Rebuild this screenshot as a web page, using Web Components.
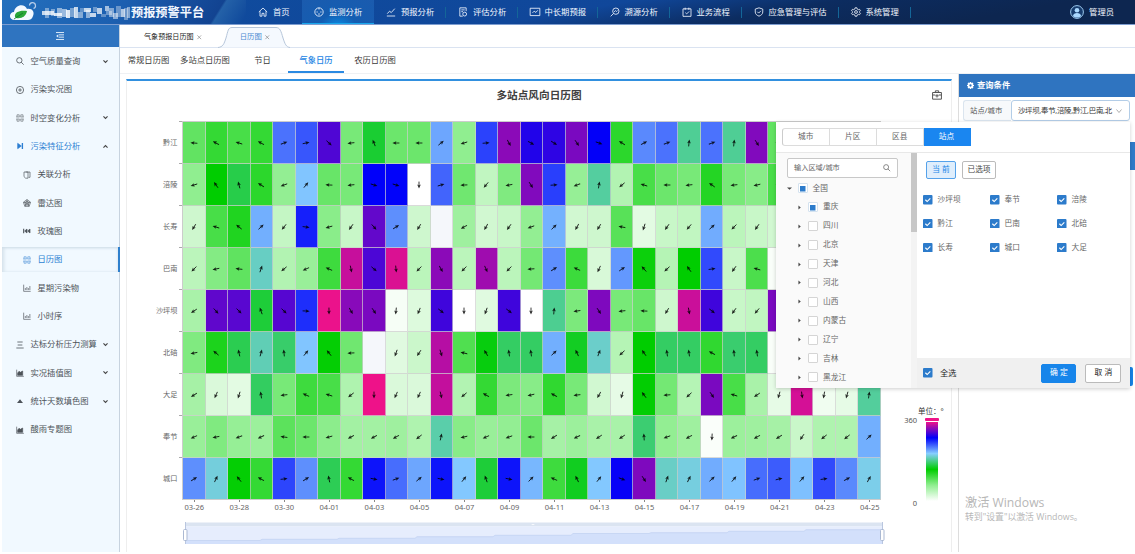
<!DOCTYPE html>
<html lang="zh-CN">
<head>
<meta charset="utf-8">
<title>预报预警平台</title>
<style>
html,body{margin:0;height:100%}
body{font-family:"Noto Sans","Noto Sans CJK SC",sans-serif;font-size:8.3px;line-height:1;color:#444;background:#fff;overflow:hidden;white-space:nowrap}
</style>
</head>
<body>
<dashboard-app></dashboard-app>
<script>
const ICONS = {
  home:'<path d="M1 6 6 1.2 11 6M2.4 5v6h2.4V7.6h2.4V11h2.4V5"/>',
  gauge:'<circle cx="6" cy="6" r="5"/><path d="M3 6h1.500M7.500 6H9M6 1v2M5 8.400h2"/>',
  trend:'<path d="M1 10.8h10M1.5 8 4.3 5l2 1.7L10.5 2"/>',
  doc:'<path d="M9.8 5V1H2.2v10h3.5M4 3.5h4M4 5.6h2"/><circle cx="8" cy="8.5" r="2.3"/>',
  chart:'<path d="M.2 1.5h11.600v8.8H.2zM3 7l2-2 2 1.5L9.3 4"/>',
  trace:'<circle cx="7" cy="5" r="3.8"/><path d="m4.2 7.8-3.4 3.4M5 6l1.6-1.7L8 5.4l1.2-1.2"/>',
  check:'<path d="M1.2 2.2h9.6v9H1.2zM3.8.8v2.6M8.2.8v2.6M4 6.8l1.6 1.5 3-3"/>',
  shield:'<path d="M6 1 10.5 2.5V6c0 2.6-2 4-4.5 5C3.500 10 1.500 8.600 1.500 6V2.500zM4 5.700l1.600 1.600 2.700-2.700"/>',
  gear:'<circle cx="6" cy="6" r="1.7"/><path d="M5 .9h2l.4 1.500 1.400.8 1.500-.4 1 1.700-1.100 1.100v.8l1.100 1.100-1 1.700-1.500-.4-1.400.8L7 11.100H5l-.4-1.500-1.400-.8-1.500.4-1-1.700 1.100-1.100v-.8L.7 4.500l1-1.700 1.500.4 1.400-.8z"/>',
  search:'<circle cx="5" cy="5" r="4" stroke-width="1.200"/><path d="m7.800 7.800 3.700 3.700" stroke-width="1.200"/>',
  plus:'<circle cx="6" cy="6" r="5.400" stroke-width="1.200"/><path d="M6 3.300v5.400M3.300 6h5.400" stroke-width="1.200"/>',
  cal:'<path d="M1.500 4.500V1.200h3.300v3.300M7.200 4.500V1.200h3.300v3.300M1.500 7.500v3.300h3.300V7.500M7.200 7.500v3.300h3.300V7.500M.3 4.500h5M6.700 4.500h5M.3 7.500h5M6.700 7.500h5" stroke-width=".8"/>',
  next:'<path d="M2.500 2v8L8 6z" fill="currentColor"/><path d="M9.600 1.500v9" stroke-width="2"/>',
  copy:'<path d="M4 1.500h6.500v8H8.500M1.500 1.500h6v9.300H4L1.500 8.500z"/>',
  radar:'<path d="M6 .8 11.300 4.800 9.300 11H2.700L.7 4.800zM6 3 9 5.300 8 9H4L3 5.300zM6 1v5M1 5l5 1M11 5 6 6M3 11l3-5M9 11 6 6"/>',
  rew:'<path d="M1 2.500v7" stroke-width="1.600"/><path d="M6 3v6L2.500 6zM10.500 3v6L7 6z" fill="currentColor"/>',
  bars:'<path d="M1 1v10h10.500M3.500 9V6M5.800 9V4.500M8 9V6M10.300 9V3"/>',
  lines:'<path d="M2 1.500h8M2.500 6h7M.5 10.500h11" stroke-width="1.200"/>',
  area:'<path d="M1 1v10h10.800"/><path d="M2.500 9.500V6l2-2.500 2 1.500 3.500-2v6.500z" fill="currentColor"/>',
  tri:'<path d="M1.500 9 6 3.500 10.500 9z" fill="currentColor" stroke="none"/>',
  down:'<path d="m2.500 4 3.500 3.500L9.500 4" stroke-width="1.900"/>',
  up:'<path d="M2.500 8 6 4.500 9.500 8" stroke-width="1.900"/>',
  thindown:'<path d="m1 3 5 6 5-6" stroke-width="1.200"/>',
  close:'<path d="m1 1 10 10m0-10-10 10" stroke-width="1.600"/>',
  fold:'<path d="M0 .8h12M4.500 4.300H12M4.500 7.700H12M0 11.200h12" stroke-width="1.400"/><path d="M3.500 3.500v5L.3 6z" fill="currentColor" stroke="none"/>',
  cog:'<path fill="currentColor" fill-rule="evenodd" stroke="none" d="M5 0h2l.4 1.800L9.500.9l1.500 1.500-1 2 2 .6v2l-2 .6 1 2-1.500 1.500-2-1L7 12H5l-.5-1.900-2 1L1 9.600l1-2L0 7V5l2-.6-1-2L2.500.9l2 .9zM6 4a2 2 0 1 0 0 4 2 2 0 0 0 0-4z"/>',
  kit:'<path d="M.7 3h10.600v8H.7zM4 3V1h4v2M.7 6H4m4 0h3.300M6 5v4M4 7h4" stroke-width="1.200"/>',
  right:'<path d="M3.500 1v10L9 6z" fill="currentColor" stroke="none"/>',
  opened:'<path d="M0 3.500h12L6 9z" fill="currentColor" stroke="none"/>'
};
function define(name, css, html){
  customElements.define(name, class extends HTMLElement{
    constructor(){
      super();
      const t=document.createElement('template');
      t.innerHTML='<style>*{box-sizing:border-box}'+css+'</style>'+html;
      this.attachShadow({mode:'open'}).append(t.content.cloneNode(true));
    }
  });
}
customElements.define('ui-icon', class extends HTMLElement{
  constructor(){super();this.attachShadow({mode:'open'});}
  connectedCallback(){
    this.shadowRoot.innerHTML='<style>:host{display:block;flex:none;width:9px;height:9px}svg{display:block;width:100%;height:100%;overflow:visible}</style><svg viewBox="0 0 12 12" fill="none" stroke="currentColor" stroke-width="1">'+ICONS[this.getAttribute('name')]+'</svg>';
  }
});
const icon=(n,c='')=>`<ui-icon name="${n}" class="${c}"></ui-icon>`;

/* top bar */
const nav=[['home','首页'],['gauge','监测分析'],['trend','预报分析'],['doc','评估分析'],['chart','中长期预报'],['trace','溯源分析'],['check','业务流程'],['shield','应急管理与评估'],['gear','系统管理']];
const mosaic=[[42,11,12,4,.75],[45,8,4,10,.4],[51,9,4,7,.4],[54,13,8,3,.8],[57,8,5,10,.5],[62,9,5,8,.55],[66,10,4,8,.85],[70,8,5,9,.4],[74,7,4,11,.75],[78,12,5,6,.45],[80,8,4,4,.3],[84,8,7,4,.75],[86,10,4,8,.5],[90,13,6,4,.75],[93,7,4,5,.35],[97,8,5,6,.7],[101,14,5,3,.3],[105,6,4,5,.6],[106,11,6,4,.35],[109,8,5,9,.45],[113,13,5,6,.5],[116,6,5,11,.35],[121,9,4,8,.65],[124,8,4,12,.35],[127,7,3,11,.45]].map(a=>`<rect x="${a[0]}" y="${a[1]}" width="${a[2]}" height="${a[3]}" fill="#fff" opacity="${a[4]}"/>`).join('');
define('top-bar',`
:host{display:flex;height:25px;margin-left:2px;color:#f4f8ff;background:linear-gradient(170deg,#0f4d9f 0,#10479a 50%,#0c2c60 66%,#0d2650 85%);border-bottom:1px solid #7d9dd0}
.brand{width:244px;display:flex;align-items:center;background:linear-gradient(122deg,#2470bd 0,#1c5fb0 48%,#124391 86%,#2461a8 87%,#104a9c 98%)}
.brand svg{width:128px;height:24px;flex:none}
h1{margin:2px 0 0 1px;font-size:12.200px;font-weight:700}
nav{display:grid;grid-template-columns:56px 72px 72px 71.500px 80px 72px 72px 97px 72px}
a{display:flex;align-items:center;gap:5px;padding-left:12px;position:relative}
a ui-icon{width:10px;height:10px}
a+a+a:after{content:"";position:absolute;right:0;top:7px;height:11px;width:1px;background:#146698}
a.on{background:radial-gradient(ellipse at 50% 110%,#0c8ae2 0,#145db1 35%,#1b5bae 100%);box-shadow:inset 0 -1px #19a9ee}
.user{margin-left:auto;margin-right:21px;display:flex;align-items:center;gap:5px}
.user svg{width:14px;height:14px}
`,`<div class="brand"><svg viewBox="2 0 128 24"><path d="M15 20C8 20 9 12 14 12c1-8 11-9 13-3 5-1 8 3 6 7-1 3-3 4-5 4z" fill="#f4f9ff"/><path d="M15 17c-1-5 5-7 12-6-1 5-5 8-11 7z" fill="#29a638"/><path d="m14 19 9-6" stroke="#0c7728" stroke-width=".8"/><path d="M29.500 5.500a3 3 0 1 1 4 3" fill="none" stroke="#b7cdea" stroke-width="1.200"/>${mosaic}</svg><h1>预报预警平台</h1></div>
<nav>${nav.map((n,i)=>`<a class="${i==1?'on':''}">${icon(n[0])}<span>${n[1]}</span></a>`).join('')}</nav>
<div class="user"><svg viewBox="0 0 14 14"><circle cx="7" cy="7" r="6.400" fill="#173c6e" stroke="#9cc9ee"/><circle cx="7" cy="5.300" r="2.300" fill="#a9d8ff"/><path d="M3 11c0-4 8-4 8 0-2 2-6 2-8 0z" fill="#a9d8ff"/></svg><span>管理员</span></div>`);

/* left menu */
const menu=[['search','空气质量查询','down'],['plus','污染实况图'],['cal','时空变化分析','down'],['next','污染特征分析','up','hl'],['copy','关联分析','','sub'],['radar','雷达图','','sub'],['rew','玫瑰图','','sub'],['cal','日历图','','sub on'],['bars','星期污染物','','sub'],['bars','小时序','','sub'],['lines','达标分析压力测算','down'],['area','实况插值图','down'],['tri','统计天数填色图','down'],['area','酸雨专题图']];
define('side-menu',`
:host{display:flex;flex-direction:column;width:118px;background:#f1f9ff;border-right:1px solid #c7d3df}
.fold{height:22px;background:#2f74c0;display:flex;align-items:center;justify-content:center;color:#e8f2fc}
.fold ui-icon{width:10px;height:8px;margin-right:2px}
.i{height:28.350px;display:flex;align-items:center;padding-left:14px;color:#4d5359}
.i span{margin-left:6.500px;flex:1}.i>ui-icon:first-child{width:8px;height:8px}
.i .ar{width:7px;height:7px;margin-right:10px;color:#444}
.sub{padding-left:21px}.hl{color:#2d7fd2}
.on{color:#2d7fd2;height:24.350px;margin:2px -1px 2px 0;border-right:2px solid #2f80cd;box-shadow:inset 0 1px 3px #cddbe5,inset 3px 0 3px #e0ebf3}
`,`<div class="fold">${icon('fold')}</div>${menu.map(m=>`<div class="i ${m[3]||''}">${icon(m[0])}<span>${m[1]}</span>${m[2]?icon(m[2],'ar'):''}</div>`).join('')}`);

/* page tabs and view tabs */
define('page-tabs',`
:host{display:flex;height:23px;border-bottom:1px solid #dae3f1;padding-left:24px;align-items:center;color:#222}
div{display:flex;align-items:center;gap:3.500px;font-size:7.100px;padding-top:2px}
ui-icon{width:4.500px;height:4.500px;color:#777}
.two{position:relative;margin-left:16px;width:70px;height:22px;padding-left:22px;color:#4a8ad2;font-size:7.400px}
.two svg{position:absolute;left:0;top:1px;width:72px;height:22px}
.two span,.two ui-icon{position:relative}
`,`<div><span>气象预报日历图</span>${icon('close')}</div><div class="two"><svg viewBox="0 0 72 22"><path d="M0 21.500C5 21 6 18 8 12 10 5 10 1.500 14 1.500H58C62 1.500 63 5 65 12 67 18 68 21 72 21.500" fill="#f5f9fe" stroke="#b6c6da"/></svg><span>日历图</span>${icon('close')}</div>`);
define('view-tabs',`
:host{display:grid;grid-template-columns:47px 66px 49px 57px 62px;height:26px;padding-left:5px;border-bottom:1px solid #eff1f4;color:#3b3b3b}
span{display:flex;align-items:center;justify-content:center}
.on{color:#1c84e4;border-bottom:2px solid #2b8ae2;height:25px;font-weight:500;padding-top:2px;margin-left:1px}
`,`<span>常规日历图</span><span>多站点日历图</span><span>节日</span><span class="on">气象日历</span><span>农历日历图</span>`);

/* wind direction heat map */
const N=null;
const rows=[
['黔江',95,118,108,118,248,258,312,84,158,90,90,230,72,265,330,298,302,325,289,122,240,248,186,248,186,327,95,90,80,70,60],
['涪陵',72,144,165,122,70,219,92,84,288,287,0,253,88,40,80,327,266,68,189,50,108,90,84,126,84,76,108,90,80,70,60],
['长寿',32,108,128,227,38,277,75,36,318,238,32,N,62,30,36,70,226,30,32,100,18,36,40,228,44,36,30,30,30,30,30],
['巴南',44,78,96,199,50,66,113,348,311,354,44,330,44,336,44,86,238,114,25,235,138,48,144,262,36,106,4,20,20,20,20],
['沙坪坝',56,317,315,160,314,272,359,329,325,6,22,307,0,20,307,0,185,82,326,84,92,32,349,307,36,40,325,60,60,60,60],
['北碚',80,130,167,195,174,219,142,88,N,20,34,343,104,148,172,172,227,154,201,48,144,172,172,120,175,172,4,50,50,50,50],
['大足',58,24,18,171,84,113,108,52,360,24,24,347,50,118,82,76,120,84,30,16,143,86,48,325,108,56,16,352,10,16,188],
['奉节',66,80,68,64,98,90,74,60,60,62,52,192,76,66,70,90,58,64,56,56,176,70,62,3,64,62,58,35,52,52,227],
['城口',238,206,142,118,264,238,168,118,281,250,230,281,218,160,281,224,113,153,218,290,326,200,207,228,220,250,256,221,262,240,210]];
const stops=[[255,255,255],[144,238,144],[0,205,0],[135,206,255],[0,0,250],[238,18,137]];
function tint(v){
  if(v===N) return '#f5f7fb';
  const p=Math.min(v/72,4.9999),i=Math.floor(p),f=p-i;
  return 'rgb('+stops[i].map((c,k)=>Math.round(c+(stops[i+1][k]-c)*f)).join()+')';
}
const arrow=v=>v===N?'':`<svg viewBox="-5 -5 10 10" style="transform:rotate(${v}deg)"><path d="M0-3.400V1"/><path d="M0 3.600-1.800-.4 0 .4 1.800-.4z" class="h"/></svg>`;
const dates=['03-26','03-28','03-30','04-01','04-03','04-05','04-07','04-09','04-11','04-13','04-15','04-17','04-19','04-21','04-23','04-25'];
define('wind-heatmap',`
:host{display:grid;grid-template-columns:56px 699px;grid-template-rows:378px 15px;font-size:7.200px;color:#666}
.y{display:grid;grid-template-rows:repeat(9,42px)}
.y span{display:flex;align-items:center;justify-content:flex-end;padding:1px 4.500px 0 0;position:relative}
.y span:after{content:"";position:absolute;right:0;top:0;width:3px;height:1px;background:#aaa}
.m{display:grid;grid-template:repeat(9,42px)/repeat(31,22.530px);border-left:1px solid #ccc;border-top:1px solid #ccc;border-bottom:1px solid #ccc;width:699px;height:379px;overflow:hidden}
.c{border-right:1px solid #cfcfcfb0;border-bottom:1px solid #cfcfcfc0;display:flex;align-items:center;justify-content:center}
svg{width:10px;height:10px;stroke:#000;stroke-width:.9;opacity:.85}.h{stroke:none;fill:#000}
.x{grid-column:2;display:grid;grid-template-columns:repeat(31,22.530px);font-size:7.500px;padding:1px 0 0 1px}
.x span{display:flex;justify-content:center;position:relative;padding-top:4px}
.x span:nth-child(odd):before{content:"";position:absolute;top:0;left:11px;width:1px;height:2px;background:#888}
`,`<div class="y">${rows.map(r=>`<span>${r[0]}</span>`).join('')}</div><div class="m">${rows.map(r=>r.slice(1).map(v=>`<div class="c" style="background:${tint(v)}">${arrow(v)}</div>`).join('')).join('')}</div><div class="x">${dates.map(d=>`<span>${d}</span><span></span>`).join('')}</div>`);
const steps='M185 540.500H260L262 539.300H337L339 538.300H415L417 536.700H493L495 535.300H571L573 533.500H649L651 532.700H727L729 531.300H804L806 529.700H883';
define('zoom-slider',`
:host{display:block;width:704px;height:24px;margin:7px 0 0 55px}svg{display:block}
`,`<svg width="704" height="24" viewBox="182 521 704 24"><path d="M185 522.500h698v4H185z" fill="#dbe4f1"/><path d="M185 526.500h698V544H185z" fill="#e6edfd"/><path d="${steps}V544H185z" fill="#d3e0fb"/><path d="${steps}" fill="none" stroke="#bfd0f0" stroke-width=".7"/><path d="M185.500 522v22M882.500 522v22" stroke="#b9c6df"/><rect x="183.500" y="529.500" width="3.500" height="11" rx="1" fill="#fff" stroke="#abb9d3"/><rect x="880.500" y="529.500" width="3.500" height="11" rx="1" fill="#fff" stroke="#abb9d3"/><path d="m531 524 2 1 2-1z" fill="#fff"/></svg>`);
define('color-legend',`
:host{display:grid;grid-template-columns:15px 1fr;grid-template-rows:10px 84px;align-content:start;column-gap:7px;width:44px;font-size:7.500px;color:#555}
.t{grid-column:1/3;padding-left:15px;color:#333}
.n{display:flex;flex-direction:column;justify-content:space-between;align-items:flex-end;height:90px;margin:-1px 1px 0 -1px}
.b{width:14px}.b i{display:block;height:3px;width:14px;border-radius:1px;background:#ee1289;margin-bottom:1px}
.b b{display:block;height:79px;width:12px;margin-left:1px;background:linear-gradient(0deg,#fff,#90ee90 20%,#00cd00 40%,#87ceff 60%,#0000fa 80%,#ee1289)}
`,`<div class="t">单位：°</div><div class="n"><span>360</span><span>0</span></div><div class="b"><i></i><b></b></div>`);
define('chart-panel',`
:host{display:grid;grid-template-columns:775px 1fr;grid-template-rows:42px 1fr;width:826px;margin:5px 0 0 6px;border-top:2px solid #3290df;border-right:1px solid #eee;border-left:1px solid #eee}
header{grid-column:1/3;display:grid;grid-template-columns:1fr 18px;padding-top:7px}
h2{margin:2px 0 0;font-size:10.650px;font-weight:700;color:#404040;text-align:center;padding-left:18px}
header ui-icon{width:10px;height:10px;margin-top:2px;margin-left:-1px;color:#555}
color-legend{margin-top:285px;margin-left:1px}
wind-heatmap{margin:-2px 0 0 -1px}
`,`<header><h2>多站点风向日历图</h2>${icon('kit')}</header><div><wind-heatmap></wind-heatmap><zoom-slider></zoom-slider></div><color-legend></color-legend>`);

/* query panel */
define('query-panel',`
:host{display:block;width:177px;border-left:1px solid #ddd;position:relative}
header{height:23px;background:#2f74c0;color:#fff;display:flex;align-items:center;padding-left:8px;gap:3px;font-weight:700}
header ui-icon{width:7px;height:7px}
.f{display:flex;margin:3px 0 0 4px;height:21px;width:167px;border-radius:3px;color:#555;font-size:7.800px}
.l{width:48px;border:1px solid #dbe5ef;border-right:0;border-radius:3px 0 0 3px;background:#f7f9fb;display:flex;align-items:center;padding-left:6px;font-size:7.400px}
.v{flex:1;border:1px solid #b3cde7;border-radius:3px;display:flex;align-items:center;justify-content:space-between;padding:0 7px 0 6px;color:#333;font-size:7.400px;letter-spacing:-.28px}
.v ui-icon{width:6px;height:6px;color:#777}
.b{width:5px;height:28px;background:#2f7bc9;margin:21px 0 0 171px}
.c{width:3px;height:19px;background:#1684e8;margin:197px 0 0 171px;border-radius:0 2px 2px 0}
.w{margin:111px 0 0 6px;color:#b7b7b7;font-size:12.200px;font-family:"Open Sans","Noto Sans CJK SC",sans-serif}
.w p{margin:4px 0 0;font-size:8.850px}
`,`<header>${icon('cog')}查询条件</header><div class="f"><div class="l">站点/城市</div><div class="v"><span>沙坪坝,奉节,涪陵,黔江,巴南,北</span>${icon('thindown')}</div></div><div class="b"></div><div class="c"></div><div class="w">激活 Windows<p>转到"设置"以激活 Windows。</p></div>`);

/* station picker */
define('check-item',`
:host{display:flex;align-items:center;gap:5px}
svg{width:9.500px;height:9.500px;flex:none}
`,`<svg viewBox="0 0 10 10"><rect width="10" height="10" rx="1" fill="#2c7bcb"/><path d="m2.500 5 1.900 1.900L7.700 3.500" fill="none" stroke="#fff" stroke-width="1.200"/></svg><slot></slot>`);
const tree=['重庆','四川','北京','天津','河北','山西','内蒙古','辽宁','吉林','黑龙江'];
define('station-picker',`
:host{display:grid;grid-template-rows:30px 1fr;width:354px;height:266px;background:#fff;box-shadow:0 1px 4px #0003;font-size:7.700px;color:#666}
.tabs{display:grid;grid-template-columns:47.500px 47.500px 46.500px 47px;height:18px;padding:6px 0 0 6px}
.tabs span{height:17.500px;border:1px solid #dcdcdc;border-left:0;display:flex;align-items:center;justify-content:center}
.tabs span:first-child{border-left:1px solid #ccc;border-radius:3px 0 0 3px}
.tabs .on{background:#1a86f0;color:#fff;border-color:#1a86f0}
.body{display:grid;grid-template-columns:135px 6px 1fr;border-top:1px solid #e8e8e8;height:236px}
.left{background:#fafafa;overflow:hidden}
.s{margin:5px 0 0 11px;width:111px;height:20px;border:1px solid #c8c8c8;border-radius:2px;background:#fff;display:flex;align-items:center;justify-content:space-between;padding:0 7px 0 6px;font-size:7.200px}
.s ui-icon{width:7.500px;height:7.500px}
.r{display:flex;align-items:center;height:18.900px;padding-left:21px}
.r.top{padding-left:10.500px}.r ui-icon{width:5px;height:5px;color:#444}
.r i{width:10px;height:10px;border:1px solid #d5d5d5;background:#fff;border-radius:1px;margin:0 5px 0 6px}
.r.half i{border-color:#d4e2ef;background:linear-gradient(#2c7bcb,#2c7bcb) center/5.500px 5.500px no-repeat #fff}
.bar{background:#f3f3f3}.bar:before{content:"";display:block;height:79px;background:#c7c7c7}
.right{display:grid;grid-template-rows:38px 72px 1fr 30px}
.btns{display:flex;gap:6px;padding:8px 0 0 9px}
.btn{height:18px;border:1px solid #bbb;border-radius:2px;display:flex;align-items:center;justify-content:center;background:#fff;color:#444}
.btn.a{width:30px;border-color:#55a2ea;background:#dfeefc;color:#1a86e8}
.g{display:grid;grid-template:repeat(3,23.800px)/67px 67px 1fr;margin:-3px 0 0 6px}
footer{background:#f0f0f0;display:flex;align-items:center;padding-left:6px;color:#222;font-size:8.200px;grid-row:4}
footer check-item{gap:7.500px}
footer .btn{width:36px;height:19px;font-size:7.800px;color:#222}
footer .ok{width:35px;background:#1785ea;border-color:#1785ea;color:#fff;margin:0 9px 0 85px}
`,`<div class="tabs"><span>城市</span><span>片区</span><span>区县</span><span class="on">站点</span></div><div class="body"><div class="left"><div class="s"><span>输入区域/城市</span>${icon('search')}</div><div class="r top half" style="margin-top:1px">${icon('opened')}<i></i>全国</div>${tree.map((t,i)=>`<div class="r ${i?'':'half'}">${icon('right')}<i></i>${t}</div>`).join('')}</div><div class="bar"></div><div class="right"><div class="btns"><div class="btn a">当 前</div><div class="btn" style="width:34px">已选项</div></div><div class="g">${['沙坪坝','奉节','涪陵','黔江','巴南','北碚','长寿','城口','大足'].map(t=>`<check-item>${t}</check-item>`).join('')}</div><footer><check-item>全选</check-item><div class="btn ok">确 定</div><div class="btn">取 消</div></footer></div></div>`);

define('dashboard-app',`
:host{display:grid;grid-template-rows:25px 1fr;width:1135px;height:554px;position:relative;overflow:hidden}
.main{display:grid;grid-template-columns:118px 1fr;margin-left:2px;height:527px}
.work{display:grid;grid-template-rows:23px 26px 1fr;min-width:0}
.content{display:flex;justify-content:space-between}
chart-panel{height:473px}query-panel{height:478px}
station-picker{position:absolute;left:776px;top:122px}
`,`<top-bar></top-bar><div class="main"><side-menu></side-menu><div class="work"><page-tabs></page-tabs><view-tabs></view-tabs><div class="content"><chart-panel></chart-panel><query-panel></query-panel></div></div></div><station-picker></station-picker>`);
</script>
</body>
</html>
